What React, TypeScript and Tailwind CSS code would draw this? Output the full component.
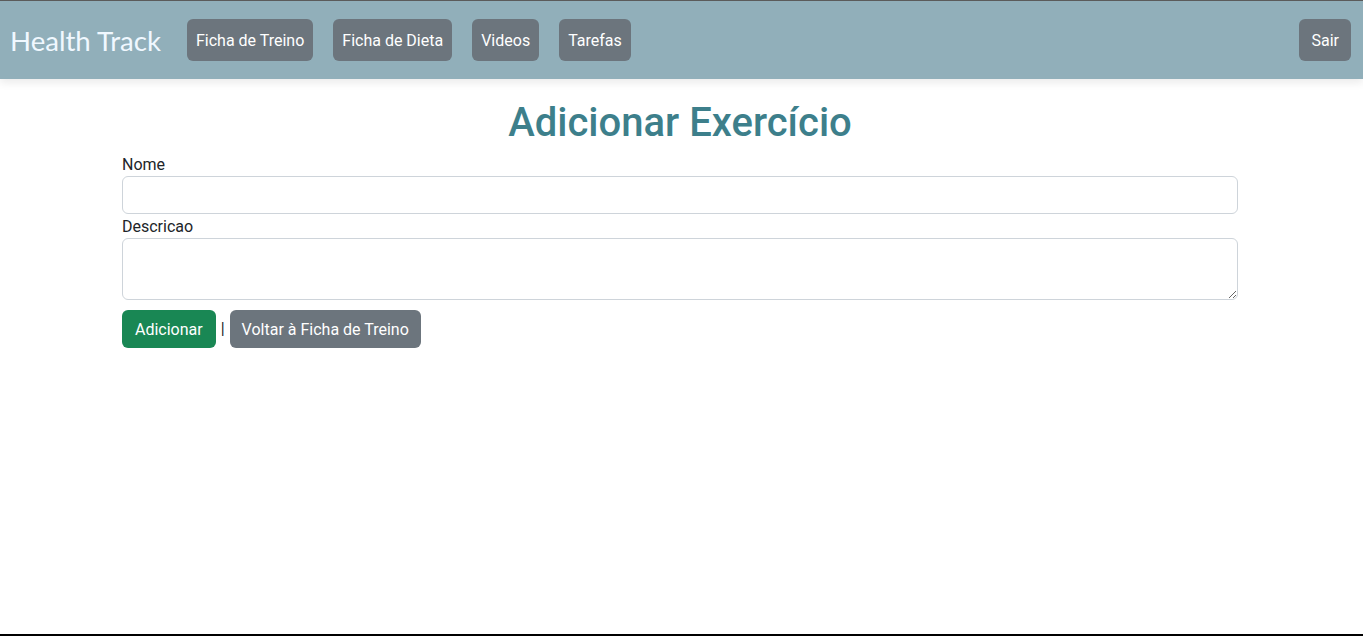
import React from "react";

export default function App() {
  const navBtn =
    "h-[42px] px-[9px] pt-[2px] rounded-[6px] bg-[#6c757d] text-white text-[16px] leading-[24px] flex items-center";
  return (
    <div
      className="h-[636px] flex flex-col bg-white text-[#212529]"
      style={{ fontFamily: "Roboto, 'Noto Sans', sans-serif" }}
    >
      <div className="h-px bg-[#5c5c5c]" />
      <nav className="h-[78px] bg-[#91afba] flex items-center pl-[10px] pr-[12px] shadow-[0_4px_8px_rgba(0,0,0,0.08)] relative z-10">
        <span
          className="text-[27.6px] text-[#f0f8ff] leading-none mt-[2px]"
          style={{ fontFamily: "Lato, sans-serif" }}
        >
          Health Track
        </span>
        <div className="flex items-center gap-[20px] ml-[26px]">
          <button className={navBtn}>Ficha de Treino</button>
          <button className={navBtn}>Ficha de Dieta</button>
          <button className={navBtn}>Videos</button>
          <button className={navBtn}>Tarefas</button>
        </div>
        <button className={navBtn + " ml-auto px-[12px]"}>Sair</button>
      </nav>
      <main className="flex-1">
        <div className="w-[1140px] ml-[110px] px-3">
          <h1 className="mt-[20px] mb-[5px] text-center text-[40px] leading-[48px] font-medium text-[#3d7f8b]">
            Adicionar Exercício
          </h1>
          <label className="block text-[16px] leading-[24px] pt-[1px] -mb-[1px]">Nome</label>
          <input
            className="block w-full h-[38px] border border-[#ced4da] rounded-[6px] px-3 outline-none"
            type="text"
          />
          <label className="block text-[16px] leading-[24px] pt-[1px] -mb-[1px]">Descricao</label>
          <textarea
            rows={2}
            className="block w-full h-[62px] border border-[#ced4da] rounded-[6px] px-3 py-1.5 outline-none"
          />
          <div className="flex items-center mt-[10px]">
            <button className="h-[38px] px-[13px] pt-[1px] rounded-[6px] bg-[#198754] text-white text-[16px]">
              Adicionar
            </button>
            <span className="mx-[5px] text-[16px] leading-[24px]">|</span>
            <button className="h-[38px] px-3 pt-[1px] rounded-[6px] bg-[#6c757d] text-white text-[16px]">
              Voltar à Ficha de Treino
            </button>
          </div>
        </div>
      </main>
      <div className="h-[2px] bg-black" />
    </div>
  );
}
